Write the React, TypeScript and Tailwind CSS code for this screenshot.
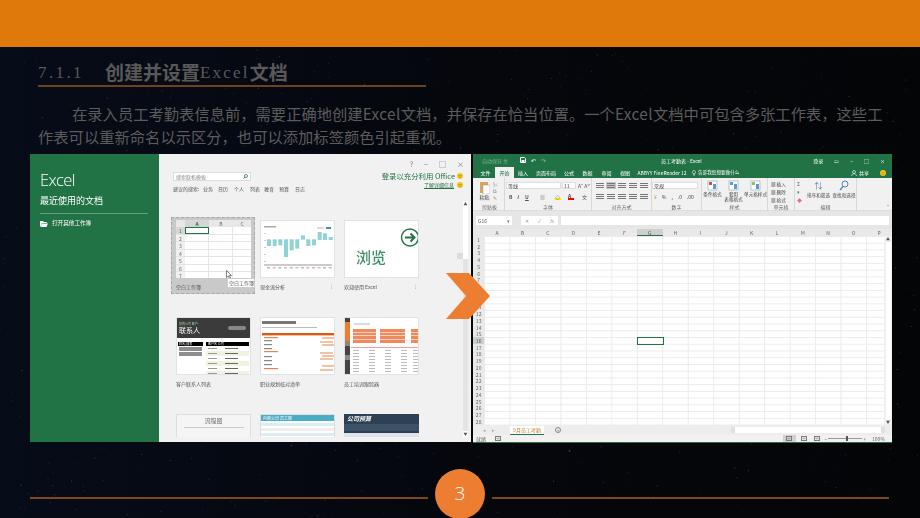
import React from "react";

const cjk = { fontFamily: '"Noto Sans CJK SC","Noto Sans",sans-serif' };
const serif = { fontFamily: '"Liberation Serif",serif' };

function Stars() {
  const dots: { x: number; y: number; o: number; s: number }[] = [];
  let seed = 12345;
  const r = () => {
    seed = (seed * 16807) % 2147483647;
    return seed / 2147483647;
  };
  for (let i = 0; i < 1300; i++) {
    dots.push({ x: r() * 920, y: r() * 518, o: 0.05 + r() * r() * 0.3, s: r() > 0.97 ? 1.5 : 1 });
  }
  return (
    <svg className="absolute inset-0" width="920" height="518">
      {dots.map((d, i) => (
        <rect key={i} x={d.x} y={d.y} width={d.s} height={d.s} fill="#c8d0e0" opacity={d.o} />
      ))}
    </svg>
  );
}

function Smile({ size = 6 }: { size?: number }) {
  return (
    <svg width={size} height={size} viewBox="0 0 10 10" className="shrink-0">
      <circle cx="5" cy="5" r="5" fill="#f5c518" />
      <circle cx="3.4" cy="4" r=".8" fill="#7a5c00" />
      <circle cx="6.6" cy="4" r=".8" fill="#7a5c00" />
      <path d="M3 6.3c1 1.2 3 1.2 4 0" stroke="#7a5c00" fill="none" strokeWidth=".7" />
    </svg>
  );
}

function BlankSheet() {
  return (
    <div className="w-[75px] h-[58px] bg-white overflow-hidden flex flex-col">
      <div className="flex h-[7px] bg-[#e8e8e8] text-[5px] leading-[7px] text-[#666] text-center shrink-0">
        <div className="w-[9px]" />
        <div className="w-[24px] bg-[#d6d6d6] font-bold text-[#217346]">A</div>
        <div className="w-[24px]">B</div>
        <div className="w-[18px]">C</div>
      </div>
      {[1, 2, 3, 4, 5, 6, 7].map((n) => (
        <div key={n} className="flex h-[7.5px] shrink-0 border-b border-[#e4e4e4] text-[5px] leading-[7px] text-[#666] text-center">
          <div className={n === 1 ? "w-[9px] bg-[#d6d6d6] text-[#217346]" : "w-[9px] bg-[#f0f0f0]"}>{n}</div>
          <div className={n === 1 ? "w-[24px] border border-[#217346]" : "w-[24px] border-r border-[#e4e4e4]"} />
          <div className="w-[24px] border-r border-[#e4e4e4]" />
          <div className="w-[18px]" />
        </div>
      ))}
    </div>
  );
}

function CashChart() {
  const bars = [
    [6, 18.3, 6.7], [11.7, 18.3, 6.7], [17.3, 18.3, 6], [23, 18.3, 17.7], [28.7, 18.3, 11], [34.3, 18.3, 9.3],
    [40, 14.3, 4.3], [45.3, 18.3, 6.7], [51, 18.3, 6], [56.7, 11, 8], [62, 12.3, 6.7], [67.7, 16, 3],
  ];
  return (
    <svg width="74" height="57" viewBox="0 0 74 57">
      <rect width="74" height="57" fill="#fff" />
      <rect x="3" y="5" width="12" height="1.5" fill="#aaa" />
      <rect x="65" y="6" width="5" height="2" fill="#2f9c95" />
      <rect x="56" y="6" width="7" height="2" fill="#ddd" />
      {[12, 19, 26, 33, 40].map((y) => (
        <rect key={y} x="3" y={y} width="2" height="1" fill="#ccc" />
      ))}
      {bars.map(([x, y, h]) => (
        <rect key={x} x={x} y={y} width="4" height={h} fill="#8fd3d6" />
      ))}
      <rect x="3" y="43.5" width="68" height="1" fill="#999" />
      {bars.map(([x], i) => (
        <rect key={x} x={x} y="46" width="3" height="1.5" fill={i % 2 ? "#e2b7b7" : "#bbb"} />
      ))}
    </svg>
  );
}

function Browse() {
  return (
    <div className="h-[57px] bg-white flex flex-col overflow-hidden">
      <div className="h-[26px] flex justify-end pt-[7px]">
        <svg width="19" height="19" viewBox="0 0 19 19" className="-mr-[1px]">
          <circle cx="10" cy="9.5" r="8.5" fill="none" stroke="#217346" strokeWidth="1.4" />
          <path d="M5 9.5h9M10.5 5.5l4 4-4 4" fill="none" stroke="#217346" strokeWidth="2" />
        </svg>
      </div>
      <div className="pl-[11px] text-[15px] leading-[20px] font-medium text-[#3f8e69]">浏览</div>
    </div>
  );
}

function Contacts() {
  return (
    <div className="h-[58px] bg-white overflow-hidden flex flex-col">
      <div className="h-[20px] bg-[#3b3b3b] px-[2px] text-white shrink-0 flex justify-between items-center">
        <div>
          <div className="text-[3px] leading-[4px] text-[#9fd49f]">您的公司 客户</div>
          <div className="text-[7px] leading-[9px]">联系人</div>
        </div>
        <div className="w-[18px] h-[4px] rounded-full bg-[#888] mr-[2px]" />
      </div>
      <div className="flex gap-[3px] pt-[4px] px-[1px]">
        <div className="w-[25px] flex flex-col gap-[1px]">
          <div className="h-[4px] bg-black text-[3px] leading-[4px] text-white px-[1px]">姓名/搜索</div>
          <div className="h-[4px] bg-[#8d8d8d] mx-[1px]" />
          <div className="h-[4px] bg-[#8d8d8d] mx-[1px]" />
        </div>
        <div className="flex-1 flex flex-col">
          <div className="h-[4px] bg-black text-[3px] leading-[4px] text-white px-[2px]">客户名 公司</div>
          {[0, 1, 2, 3, 4, 5].map((i) => (
            <div key={i} className={`h-[5px] flex gap-[8px] px-[2px] items-center ${i % 2 ? "bg-[#eff3df]" : "bg-white"}`}>
              <div className="w-[9px] h-[1px] bg-[#999]" />
              <div className="w-[13px] h-[1px] bg-[#666]" />
            </div>
          ))}
        </div>
      </div>
    </div>
  );
}

function Checklist() {
  return (
    <svg width="74" height="57" viewBox="0 0 74 57">
      <rect width="74" height="57" fill="#fff" />
      <rect x="1" y="3" width="34" height="3" fill="#777" />
      <rect x="1" y="9" width="55" height="1" fill="#bbb" />
      <rect x="1" y="15" width="74" height="2.4" fill="#dd5a10" />
      {[19, 22, 26, 30, 33, 38, 42, 46, 50].map((y, i) => (
        <rect key={y} x="3" y={y} width={i % 4 === 0 ? 14 : 8} height="1.2" fill={i % 4 === 0 ? "#e8844e" : "#888"} />
      ))}
      {[19, 23, 26, 34, 37, 40, 47, 51].map((y, i) => (
        <rect key={y} x={61 - (i % 2) * 2} y={y} width={13} height="2" fill="#f3c3a4" />
      ))}
    </svg>
  );
}

function Attendance() {
  return (
    <svg width="74" height="57" viewBox="0 0 74 57">
      <rect width="74" height="57" fill="#fff" />
      <rect width="5" height="57" fill="#444" />
      <rect y="4" width="5" height="19" fill="#ed7d31" />
      <rect y="23" width="5" height="5" fill="#888" />
      <rect y="37" width="5" height="5" fill="#888" />
      <rect x="9" y="5" width="16" height="2" fill="#ddd" />
      {[[8, 23], [35, 25], [66, 9]].map(([x, w]) => (
        <g key={x}>
          <rect x={x} y="11" width={w} height="14" fill="#f08a5d" />
          <rect x={x} y="14" width={w} height=".6" fill="#fff" />
          <rect x={x} y="17" width={w} height=".6" fill="#fff" />
          <rect x={x} y="21" width={w} height=".6" fill="#fff" />
        </g>
      ))}
      <rect x="6" y="29" width="68" height=".8" fill="#e88" />
      {[32, 35, 38, 41, 44, 47, 50, 53].map((y) =>
        [8, 24, 40, 56, 68].map((x) => <rect key={x + "-" + y} x={x} y={y} width="6" height="1" fill="#bbb" />)
      )}
    </svg>
  );
}

function Card({ children, label, dots }: { children: React.ReactNode; label: string; dots?: boolean }) {
  return (
    <div className="w-[75px] flex flex-col">
      <div className="h-[58px] border border-[#e2e2e2] overflow-hidden bg-white">{children}</div>
      <div className="h-[18px] flex justify-between items-center text-[5px] text-[#555]">
        <span>{label}</span>
        {dots && <span className="text-[#888] pr-[3px]">⁝</span>}
      </div>
    </div>
  );
}

function StartScreen() {
  return (
    <div className="w-[441px] h-[288px] flex overflow-hidden bg-[#f1f1f1] blur-[0.4px]">
      <div className="w-[129px] bg-[#217346] pl-[10px] pt-[15px] text-white shrink-0">
        <div className="text-[16.5px] leading-[22px] font-light tracking-[-0.6px]" style={{ fontFamily: '"Open Sans",sans-serif' }}>
          Excel
        </div>
        <div className="text-[9px] leading-[12px] mt-[4px]">最近使用的文档</div>
        <div className="h-px w-[108px] bg-[#5f9f7e] mt-[6px]" />
        <div className="flex items-center gap-[4px] mt-[5px] text-[5.6px] leading-[9px]">
          <svg width="8" height="7" viewBox="0 0 8 7">
            <path d="M0 1h3l1 1h3v1H2L0 7zM2 3.4h6L6.5 7H.5z" fill="#fff" />
          </svg>
          打开其他工作簿
        </div>
      </div>
      <div className="flex-1 flex flex-col relative pt-[2px] text-[#555]">
        <div className="h-[16px] flex justify-end items-center gap-[11px] pr-[7px] text-[7px] text-[#777]">
          <span>?</span>
          <span>−</span>
          <span>□</span>
          <span>×</span>
        </div>
        <div className="flex justify-between pl-[14px] pr-[8px] h-[22px]">
          <div className="flex flex-col">
            <div className="w-[78px] h-[9px] bg-white border border-[#ddd] flex justify-between items-center px-[2px] text-[5px] leading-[8px] text-[#888]">
              搜索联机模板
              <svg width="5" height="5" viewBox="0 0 6 6">
                <circle cx="3.6" cy="2.4" r="1.8" fill="none" stroke="#217346" strokeWidth=".9" />
                <path d="M2.4 3.6L.5 5.5" stroke="#217346" />
              </svg>
            </div>
            <div className="flex text-[5px] leading-[8px] mt-[4px] whitespace-nowrap text-[#555]">
              <span className="w-[30px]">建议的搜索:</span>
              <span className="w-[15px]">业务</span>
              <span className="w-[16px]">日历</span>
              <span className="w-[16px]">个人</span>
              <span className="w-[14px]">列表</span>
              <span className="w-[15px]">教育</span>
              <span className="w-[16px]">预算</span>
              <span>日志</span>
            </div>
          </div>
          <div className="flex flex-col items-end -mt-[2px]">
            <div className="flex items-center gap-[2px] text-[7.4px] leading-[11px] text-[#217346] whitespace-nowrap">
              登录以充分利用 Office <Smile />
            </div>
            <div className="flex items-center gap-[3px] text-[5px] leading-[8px] text-[#217346] underline">
              了解详细信息 <Smile />
            </div>
          </div>
        </div>
        <div className="flex-1 flex overflow-hidden">
          <div className="w-[302px] pl-[17px] pt-[26px] flex flex-col gap-[21px] overflow-hidden h-[243px]">
            <div className="flex gap-[9px] shrink-0">
              <div className="relative w-[75px]">
                <div className="absolute -left-[5px] -top-[3px] w-[84px] h-[77px] bg-[#c9c9c9] border border-dashed border-[#a8a8a8]" />
                <div className="relative">
                  <BlankSheet />
                  <div className="h-[18px] flex items-center text-[5px] text-[#555]">空白工作簿</div>
                  <svg className="absolute left-[50px] top-[50px]" width="6" height="9" viewBox="0 0 6 9">
                    <path d="M.5.5v7l1.7-1.5L3.5 8.5l1-.5-1.2-2.5h2.2z" fill="#fff" stroke="#333" strokeWidth=".6" />
                  </svg>
                  <div className="absolute left-[51px] top-[58px] w-[28px] h-[10px] bg-white border border-[#ccc] text-[5px] leading-[8px] px-[1px] whitespace-nowrap">
                    空白工作簿
                  </div>
                </div>
              </div>
              <Card label="现金流分析" dots>
                <CashChart />
              </Card>
              <Card label="欢迎使用 Excel" dots>
                <Browse />
              </Card>
            </div>
            <div className="flex gap-[9px] shrink-0">
              <Card label="客户联系人列表">
                <Contacts />
              </Card>
              <Card label="职业规划核对清单">
                <Checklist />
              </Card>
              <Card label="员工培训跟踪器">
                <Attendance />
              </Card>
            </div>
            <div className="flex gap-[9px] shrink-0">
              <div className="w-[75px] h-[58px] bg-[#f5f5f5] border border-[#ddd] text-center">
                <div className="text-[6px] leading-[12px] text-[#777]">流程图</div>
                <div className="h-[1px] w-[60px] bg-[#ccc] mx-auto" />
              </div>
              <div className="w-[75px] h-[58px] bg-white border border-[#ddd]">
                <div className="h-[6px] bg-[#4bacc6] text-[4px] leading-[6px] text-white px-[2px]">内容公司 员工服</div>
                <div className="h-[3px] bg-[#daeef3] mt-[2px]" />
                <div className="h-[3px] mt-[2px] bg-[#eee]" />
                <div className="h-[3px] mt-[2px] bg-[#daeef3]" />
              </div>
              <div className="w-[75px] h-[58px] bg-[#2e4053]">
                <div className="h-[10px] text-[6px] leading-[10px] text-white px-[3px] italic font-bold">公司预算</div>
                <div className="h-[7px] bg-[#3c5166]" />
                <div className="h-[6px] bg-[#dce3ea] mt-[2px]" />
              </div>
            </div>
          </div>
          <div className="flex-1 flex justify-end pr-[3px]">
            <div className="relative w-[5px] h-[236px] mt-[7px] flex flex-col bg-[#e4e4e4]">
              <div className="h-[6px] bg-white text-[4px] leading-[6px] text-center text-[#555]">▲</div>
              <div className="flex-1">
                <div className="h-[52px] bg-white" />
              </div>
              <div className="h-[6px] bg-white text-[4px] leading-[6px] text-center text-[#555]">▼</div>
              <div className="absolute -left-[6px] top-[52px] w-[6px] h-[6px] bg-[#dcdcdc]" />
            </div>
          </div>
        </div>
      </div>
    </div>
  );
}

const tabs: [string, number][] = [
  ["文件", 19], ["开始", 19], ["插入", 18], ["页面布局", 28], ["公式", 18], ["数据", 19], ["审阅", 19], ["视图", 18], ["ABBYY FineReader 12", 56],
];
const cols = "ABCDEFGHIJKLMNOP".split("");
const rows = Array.from({ length: 28 }, (_, i) => i + 1);

function Group({ w, label, children }: { w: number; label: string; children: React.ReactNode }) {
  return (
    <div className="h-full flex flex-col border-r border-[#d8d8d8] shrink-0" style={{ width: w }}>
      <div className="h-[26px] overflow-hidden">{children}</div>
      <div className="h-[7px] text-[5px] leading-[7px] text-center text-[#666]">{label}</div>
    </div>
  );
}

function Btn({ text, color, label }: { text?: string; color: string; label: string }) {
  return (
    <div className="flex-1 flex flex-col items-center text-[4.6px] leading-[5px] text-[#444] whitespace-nowrap">
      <svg width="11" height="11" viewBox="0 0 11 11">
        <rect x="1" y="1" width="9" height="9" fill="#fff" stroke="#8aa" strokeWidth=".6" />
        <rect x="2" y="2" width="3" height="3" fill={color} />
        <rect x="6" y="4" width="3" height="5" fill="#5b9bd5" />
      </svg>
      <span className="mt-[1px]">{label}</span>
      {text && <span>{text}</span>}
    </div>
  );
}

function ViewIcon() {
  return (
    <svg width="6" height="5" viewBox="0 0 6 5">
      <rect x=".5" y=".5" width="5" height="4" fill="none" stroke="#777" />
      <path d="M0 2.5h6M3 0v5" stroke="#999" strokeWidth=".5" />
    </svg>
  );
}

function Sheet() {
  return (
    <div className="w-[419px] h-[289px] flex flex-col bg-white overflow-hidden blur-[0.4px] border-b border-[#217346]">
      <div className="h-[13px] bg-[#217346] flex items-center text-[5px] text-[#cfe5d9] shrink-0 pl-[9px] pr-[7px] whitespace-nowrap">
        <span className="opacity-50 w-[38px]">自动保存 关</span>
        <span className="w-[33px] text-white text-[6px] flex gap-[5px]">
          <svg width="6" height="6" viewBox="0 0 6 6" className="mt-[1px]">
            <path d="M.5.5h4l1 1v4h-5z" fill="none" stroke="#fff" />
            <rect x="1.5" y="3" width="3" height="2.5" fill="#fff" />
          </svg>
          <span>↶</span>
          <span className="opacity-50">↷</span>
        </span>
        <span className="flex-1 text-white pl-[108px]">员工考勤表 - Excel</span>
        <span className="flex gap-[11px] text-white">
          <span>登录</span>
          <span>▭</span>
          <span>−</span>
          <span>□</span>
          <span>×</span>
        </span>
      </div>
      <div className="h-[11px] bg-[#217346] flex text-[5px] leading-[11px] text-white shrink-0 pl-[3px] whitespace-nowrap">
        {tabs.map(([t, w], i) => (
          <div key={t} className={`text-center ${i === 1 ? "bg-[#f1f1f1] text-[#217346]" : ""}`} style={{ width: w }}>
            {t}
          </div>
        ))}
        <div className="ml-[2px] flex items-center gap-[2px] text-[4.6px]">
          <svg width="4" height="6" viewBox="0 0 4 6">
            <path d="M2 .5a1.5 1.5 0 0 1 1 2.6V4H1v-.9A1.5 1.5 0 0 1 2 .5zM1 5h2" fill="none" stroke="#fff" strokeWidth=".6" />
          </svg>
          告诉我您想要做什么
        </div>
        <div className="ml-auto pr-[6px] flex items-center gap-[2px]">
          <svg width="6" height="6" viewBox="0 0 6 6">
            <circle cx="3" cy="2" r="1.5" fill="none" stroke="#fff" strokeWidth=".6" />
            <path d="M.5 6c0-3 5-3 5 0" fill="none" stroke="#fff" strokeWidth=".6" />
          </svg>
          <span>共享</span>
          <span className="w-[7px]" />
          <Smile />
        </div>
      </div>
      <div className="h-[33px] bg-[#f1f1f1] flex shrink-0 pl-[2px] border-b border-[#ddd]">
        <Group w={30} label="剪贴板">
          <div className="flex pl-[4px] pt-[3px] gap-[3px] text-[5px] leading-[6px] text-[#444]">
            <div className="flex flex-col items-center">
              <svg width="11" height="13" viewBox="0 0 11 13">
                <rect x="1" y="1" width="8" height="11" fill="#d8a85a" />
                <rect x="4" y="4" width="7" height="9" fill="#fff" stroke="#999" strokeWidth=".5" />
              </svg>
              粘贴
            </div>
            <div className="flex flex-col gap-[1px] text-[5px] leading-[6px] text-[#5b7fa5]">
              <span>✂</span>
              <span>⧉</span>
              <span className="text-[#c58a2c]">✎</span>
            </div>
          </div>
        </Group>
        <Group w={87} label="字体">
          <div className="pl-[1px] pt-[4px] text-[5px] text-[#444] whitespace-nowrap">
            <div className="flex gap-[1px] items-center h-[7px]">
              <div className="w-[55px] h-[7px] bg-white border border-[#ddd] leading-[6px] px-[1px]">等线</div>
              <div className="w-[14px] h-[7px] bg-white border border-[#ddd] leading-[6px] px-[1px]">11</div>
              <span className="pl-[1px] text-[#555]">Aˆ Aˇ</span>
            </div>
            <div className="flex items-center mt-[4px] h-[7px] leading-[7px] font-bold pl-[3px] text-[#555]">
              <span className="w-[8px]">B</span>
              <span className="w-[8px] italic">I</span>
              <span className="w-[15px] underline">U</span>
              <span className="w-[15px] text-[#999] font-normal">▦</span>
              <span className="w-[6px] h-[7px] border-b-2 border-[#ffe000] font-normal mr-[7px]">◇</span>
              <span className="w-[6px] h-[7px] border-b-2 border-[#ff0000] mr-[8px] leading-[5px]">A</span>
              <span className="font-normal">文</span>
            </div>
          </div>
        </Group>
        <Group w={60} label="对齐方式">
          <div className="grid grid-cols-[repeat(5,10px)] gap-x-[1px] gap-y-[4px] pt-[4px] pl-[3px]">
            {[0, 1, 2, 3, 4, 5, 6, 7, 8, 9].map((i) => (
              <div key={i} className={`h-[7px] flex flex-col justify-center gap-[1px] px-[1px] ${i === 1 ? "bg-[#c6c6c6]" : ""}`}>
                <div className="h-px bg-[#777]" />
                <div className="h-px bg-[#777]" />
                <div className="h-px bg-[#777]" />
              </div>
            ))}
          </div>
        </Group>
        <Group w={50} label="数字">
          <div className="px-[0px] pt-[4px] text-[5px] text-[#444] whitespace-nowrap">
            <div className="w-[46px] h-[7px] bg-white border border-[#ddd] leading-[6px] px-[1px]">常规</div>
            <div className="flex gap-[5px] mt-[4px] leading-[7px] pl-[2px]">
              <span className="text-[#c58a2c]">¥</span>
              <span>%</span>
              <span>,</span>
              <span>.0</span>
              <span>.00</span>
            </div>
          </div>
        </Group>
        <Group w={66} label="样式">
          <div className="flex pt-[2px] h-full">
            <Btn color="#c0504d" label="条件格式" />
            <Btn color="#5b9bd5" label="套用" text="表格格式" />
            <Btn color="#9bbb59" label="单元格样式" />
          </div>
        </Group>
        <Group w={27} label="单元格">
          <div className="flex flex-col pt-[2px] pl-[3px] text-[4.6px] leading-[8px] text-[#444] whitespace-nowrap">
            <span>▦ 插入</span>
            <span>▦ 删除</span>
            <span>▦ 格式</span>
          </div>
        </Group>
        <Group w={62} label="编辑">
          <div className="flex pt-[2px] pl-[2px] h-full">
            <div className="w-[8px] flex flex-col text-[5px] leading-[8px] text-[#555]">
              <span>Σ</span>
              <span className="text-[#3a8f64]">▾</span>
              <span className="text-[#e06aa0]">◆</span>
            </div>
            <div className="w-[27px] flex flex-col items-center text-[4.6px] leading-[6px] text-[#444] whitespace-nowrap">
              <span className="text-[8px] leading-[11px] text-[#5b7fa5]">⇅</span>
              <span className="mt-px">排序和筛选</span>
            </div>
            <div className="w-[24px] flex flex-col items-center text-[4.6px] leading-[6px] text-[#444] whitespace-nowrap">
              <svg width="10" height="11" viewBox="0 0 10 11">
                <circle cx="6" cy="4" r="3" fill="none" stroke="#4b86c4" />
                <path d="M4 6.5L1 10" stroke="#4b86c4" strokeWidth="1.3" />
              </svg>
              <span className="mt-px">查找和选择</span>
            </div>
          </div>
        </Group>
        <div className="flex-1 flex justify-end items-end pr-[3px] text-[5px] leading-[7px] text-[#666]">ˆ</div>
      </div>
      <div className="h-[18px] bg-[#e6e6e6] flex items-center gap-[3px] px-[3px] shrink-0 text-[5px] text-[#555]">
        <div className="w-[36px] h-[9px] bg-white leading-[9px] px-[2px] flex justify-between">
          G16<span className="text-[#777]">▾</span>
        </div>
        <div className="w-[3px]" />
        <div className="w-[37px] h-[9px] bg-white leading-[9px] text-[#999] flex justify-around">
          <span>✕</span>
          <span>✓</span>
          <span className="italic">fx</span>
        </div>
        <div className="flex-1 h-[9px] bg-white" />
      </div>
      <div className="flex-1 flex flex-col relative">
        <div className="flex h-[7px] bg-[#e9e9e9] text-[5px] leading-[7px] text-center text-[#666] shrink-0">
          <div className="w-[11.3px] shrink-0" />
          {cols.map((c) => (
            <div key={c} className={`w-[25.47px] shrink-0 ${c === "G" ? "bg-[#cfcfcf] border-b border-[#217346] text-[#217346]" : ""}`}>
              {c}
            </div>
          ))}
        </div>
        <div className="flex h-[189px] shrink-0 relative">
          <div className="w-[11.3px] shrink-0 bg-[#e9e9e9] flex flex-col text-[5px] text-center text-[#666]">
            {rows.map((r) => (
              <div key={r} className={`h-[6.74px] leading-[7px] shrink-0 ${r === 16 ? "bg-[#cfcfcf] text-[#217346]" : ""}`}>
                {r}
              </div>
            ))}
          </div>
          <div className="w-[400px] bg-[linear-gradient(to_right,#ebebeb_1px,transparent_1px),linear-gradient(to_bottom,#ebebeb_1px,transparent_1px)] bg-[size:25.47px_6.74px] relative">
            <div className="absolute left-[152.8px] top-[101.1px] w-[26.5px] h-[7.7px] border border-[#217346]" />
          </div>
          <div className="w-[8px] bg-[#f0f0f0] flex flex-col items-center">
            <div className="h-[6px] text-[4px] leading-[6px] text-[#555]">▲</div>
            <div className="w-[5px] flex-1 bg-white" />
            <div className="h-[6px] text-[4px] leading-[6px] text-[#555]">▼</div>
          </div>
        </div>
        <div className="h-[10px] bg-[#ededed] flex items-center text-[5px] shrink-0">
          <div className="w-[10px]" />
          <div className="text-[#aaa] w-[27px] flex gap-[6px]">
            <span>◂</span>
            <span>▸</span>
          </div>
          <div className="w-[34px] h-[9px] bg-white border-b border-[#217346] text-center leading-[8px] text-[#c77d2a] whitespace-nowrap">9月员工考勤</div>
          <div className="ml-[11px] w-[6px] h-[6px] rounded-full border border-[#888] text-[4px] leading-[4px] text-center text-[#666]">+</div>
          <div className="flex-1" />
          <div className="w-[154px] h-[6px] bg-white mr-[7px] border-x-[4px] border-[#e0e0e0]" />
        </div>
        <div className="flex-1 bg-[#f1f1f1] flex items-center text-[5px] text-[#666] pl-[3px]">
          <span>就绪</span>
          <span className="ml-[9px]">
            <ViewIcon />
          </span>
          <div className="flex-1" />
          <div className="w-[13px] h-[7px] bg-[#d0d0d0] flex items-center justify-center">
            <ViewIcon />
          </div>
          <span className="ml-[5px]">
            <ViewIcon />
          </span>
          <span className="ml-[7px] mr-[5px]">
            <ViewIcon />
          </span>
          <span>−</span>
          <div className="w-[34px] h-px bg-[#999] mx-[1px] relative">
            <div className="absolute left-[18px] -top-[2px] w-[2px] h-[5px] bg-[#555]" />
          </div>
          <span>+</span>
          <span className="ml-[6px] mr-[7px] whitespace-nowrap">100%</span>
        </div>
      </div>
    </div>
  );
}

export default function App() {
  return (
    <div className="relative w-[920px] h-[518px] overflow-hidden bg-gradient-to-r from-[#060c18] via-[#05070d] to-[#040507]" style={cjk}>
      <Stars />
      <div className="relative flex flex-col h-full">
        <div className="h-[47px] bg-[#df790c] shrink-0" />
        <div className="pl-[38px] pt-[13px] shrink-0">
          <div className="w-[388px] h-[27px] border-b-2 border-[#6e421a] flex items-center text-[#595959] whitespace-nowrap">
            <span className="text-[17px] tracking-[2.4px] w-[67px]" style={serif}>
              7.1.1
            </span>
            <span className="text-[19px] font-bold">创建并设置</span>
            <span className="text-[17px] tracking-[2.2px]" style={serif}>
              Excel
            </span>
            <span className="text-[19px] font-bold">文档</span>
          </div>
        </div>
        <div className="pl-[38px] pt-[15px] text-[15.3px] leading-[23px] text-[#5c5c5c] whitespace-nowrap shrink-0">
          <div className="pl-[34px]">
            在录入员工考勤表信息前，需要正确地创建<span className="tracking-[0.4px]">Excel</span>文档，并保存在恰当位置。一个<span className="tracking-[0.4px]">Excel</span>文档中可包含多张工作表，这些工
          </div>
          <div>作表可以重新命名以示区分，也可以添加标签颜色引起重视。</div>
        </div>
        <div className="flex items-start gap-[2px] pl-[30px] pt-[6px] shrink-0">
          <StartScreen />
          <Sheet />
        </div>
        <div className="flex pl-[30px] pt-[54px] shrink-0">
          <div className="w-[398px] h-[2px] bg-[#7d4a17]" />
          <div className="w-[64px]" />
          <div className="w-[397px] h-[2px] bg-[#7d4a17]" />
        </div>
      </div>
      <svg className="absolute left-[446px] top-[273px]" width="44" height="46" viewBox="0 0 44 46">
        <path d="M0 0h23l21 23-21 23H0l20-23z" fill="#ed7d31" />
      </svg>
      <div className="absolute left-[434.5px] top-[468.5px] w-[50px] h-[50px] rounded-full bg-[#ed7d31] flex items-center justify-center text-white text-[19px] leading-none font-light pl-[1px]" style={{ fontFamily: '"Open Sans",sans-serif' }}>
        3
      </div>
    </div>
  );
}
